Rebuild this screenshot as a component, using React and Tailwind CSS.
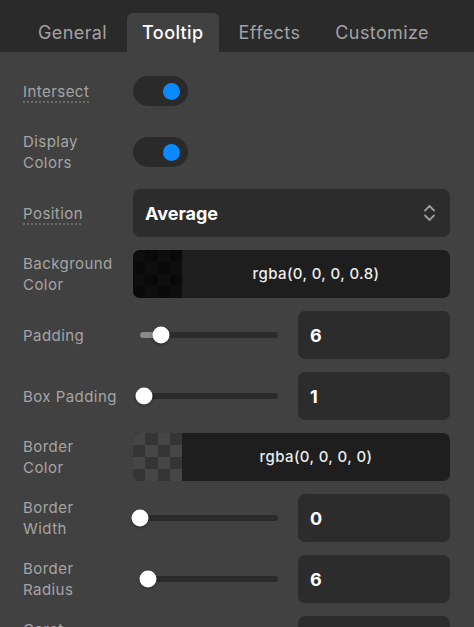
import React from "react";

const font = { fontFamily: "Inter, 'Noto Sans', sans-serif" };

function Label({ children, dotted }) {
  return (
    <div className="w-[110px] shrink-0 text-[15px] leading-[21px] text-[#a5a5a5] tracking-[0.45px]">
      {dotted ? (
        <span className="underline decoration-dotted decoration-[#7a7a7a] underline-offset-[5px]">{children}</span>
      ) : (
        children
      )}
    </div>
  );
}

function Toggle() {
  return (
    <div className="w-[55px] h-[30px] rounded-full bg-[#2a2a2a] flex items-center justify-end pr-[8px]">
      <div className="w-[17px] h-[17px] rounded-full bg-[#0b8aff]" />
    </div>
  );
}

function Slider({ pos, fill }) {
  return (
    <div className="w-[152px] shrink-0 px-[7px]">
      <div className="relative h-[6px] rounded-full bg-[#2b2b2b]">
        {fill ? (
          <div className="absolute left-0 top-0 h-full rounded-l-full bg-[#8a8a8a]" style={{ width: fill }} />
        ) : null}
        <div
          className="absolute top-1/2 w-[17px] h-[17px] -translate-x-1/2 -translate-y-1/2 rounded-full bg-white shadow-[0_1px_3px_rgba(0,0,0,0.4)]"
          style={{ left: pos }}
        />
      </div>
    </div>
  );
}

function NumInput({ value }) {
  return (
    <div className="ml-auto w-[152px] h-[48px] rounded-[7px] bg-[#2c2c2c] flex items-center pl-[12px] text-[18px] font-bold text-white">
      {value}
    </div>
  );
}

function Row({ children }) {
  return <div className="flex items-center h-[48px]">{children}</div>;
}

function ColorField({ text, checker }) {
  const cells = [];
  for (let r = 0; r < 4; r++) {
    for (let c = 0; c < 4; c++) {
      const dark = (r + c) % 2 === 1;
      cells.push(
        <div
          key={r + "-" + c}
          className={checker ? (dark ? "bg-[#353535]" : "bg-[#464646]") : dark ? "bg-[#0a0a0a]" : "bg-[#0e0e0e]"}
        />
      );
    }
  }
  return (
    <div className="flex-1 h-[48px] rounded-[7px] overflow-hidden flex bg-[#1e1e1e]">
      <div className="w-[49px] h-full grid grid-cols-4 grid-rows-4 shrink-0">{cells}</div>
      <div className="flex-1 flex items-center justify-center text-[15px] font-medium tracking-[0.4px] text-[#ececec]">{text}</div>
    </div>
  );
}

export default function App() {
  const tabs = ["General", "Tooltip", "Effects", "Customize"];
  return (
    <div style={font} className="w-[474px] h-[627px] overflow-hidden bg-[#414141]">
      <div className="h-[52px] bg-[#2a2a2a] flex items-end pl-[23px] gap-[5px]">
        {tabs.map((t) => (
          <div
            key={t}
            className={
              t === "Tooltip"
                ? "h-[39px] px-[15px] rounded-t-[6px] bg-[#414141] flex items-center text-[18px] font-medium tracking-[0.4px] text-white"
                : "h-[39px] px-[15px] flex items-center text-[18px] tracking-[0.4px] text-[#a2a2a2]"
            }
          >
            {t}
          </div>
        ))}
      </div>
      <div className="pt-[15px] pl-[23px] pr-[24px] flex flex-col gap-[13px]">
        <Row>
          <Label dotted>Intersect</Label>
          <Toggle />
        </Row>
        <Row>
          <Label>
            Display
            <br />
            Colors
          </Label>
          <Toggle />
        </Row>
        <Row>
          <Label dotted>Position</Label>
          <div className="flex-1 h-[48px] rounded-[7px] bg-[#2c2c2c] flex items-center pl-[12px] pr-[14px]">
            <span className="text-[18px] font-bold text-white">Average</span>
            <svg className="ml-auto" width="13" height="18" viewBox="0 0 13 18" fill="none" stroke="#9c9c9c" strokeWidth="1.8" strokeLinecap="round" strokeLinejoin="round">
              <path d="M2 6.5 L6.5 2 L11 6.5" />
              <path d="M2 11.5 L6.5 16 L11 11.5" />
            </svg>
          </div>
        </Row>
        <Row>
          <Label>
            Background
            <br />
            Color
          </Label>
          <ColorField text="rgba(0, 0, 0, 0.8)" />
        </Row>
        <Row>
          <Label>Padding</Label>
          <Slider pos="21px" fill="16px" />
          <NumInput value="6" />
        </Row>
        <Row>
          <Label>Box Padding</Label>
          <Slider pos="4px" />
          <NumInput value="1" />
        </Row>
        <Row>
          <Label>
            Border
            <br />
            Color
          </Label>
          <ColorField text="rgba(0, 0, 0, 0)" checker />
        </Row>
        <Row>
          <Label>
            Border
            <br />
            Width
          </Label>
          <Slider pos="0px" />
          <NumInput value="0" />
        </Row>
        <Row>
          <Label>
            Border
            <br />
            Radius
          </Label>
          <Slider pos="8px" />
          <NumInput value="6" />
        </Row>
        <Row>
          <Label>
            Caret
            <br />
            Size
          </Label>
          <Slider pos="30px" />
          <NumInput value="5" />
        </Row>
      </div>
    </div>
  );
}
